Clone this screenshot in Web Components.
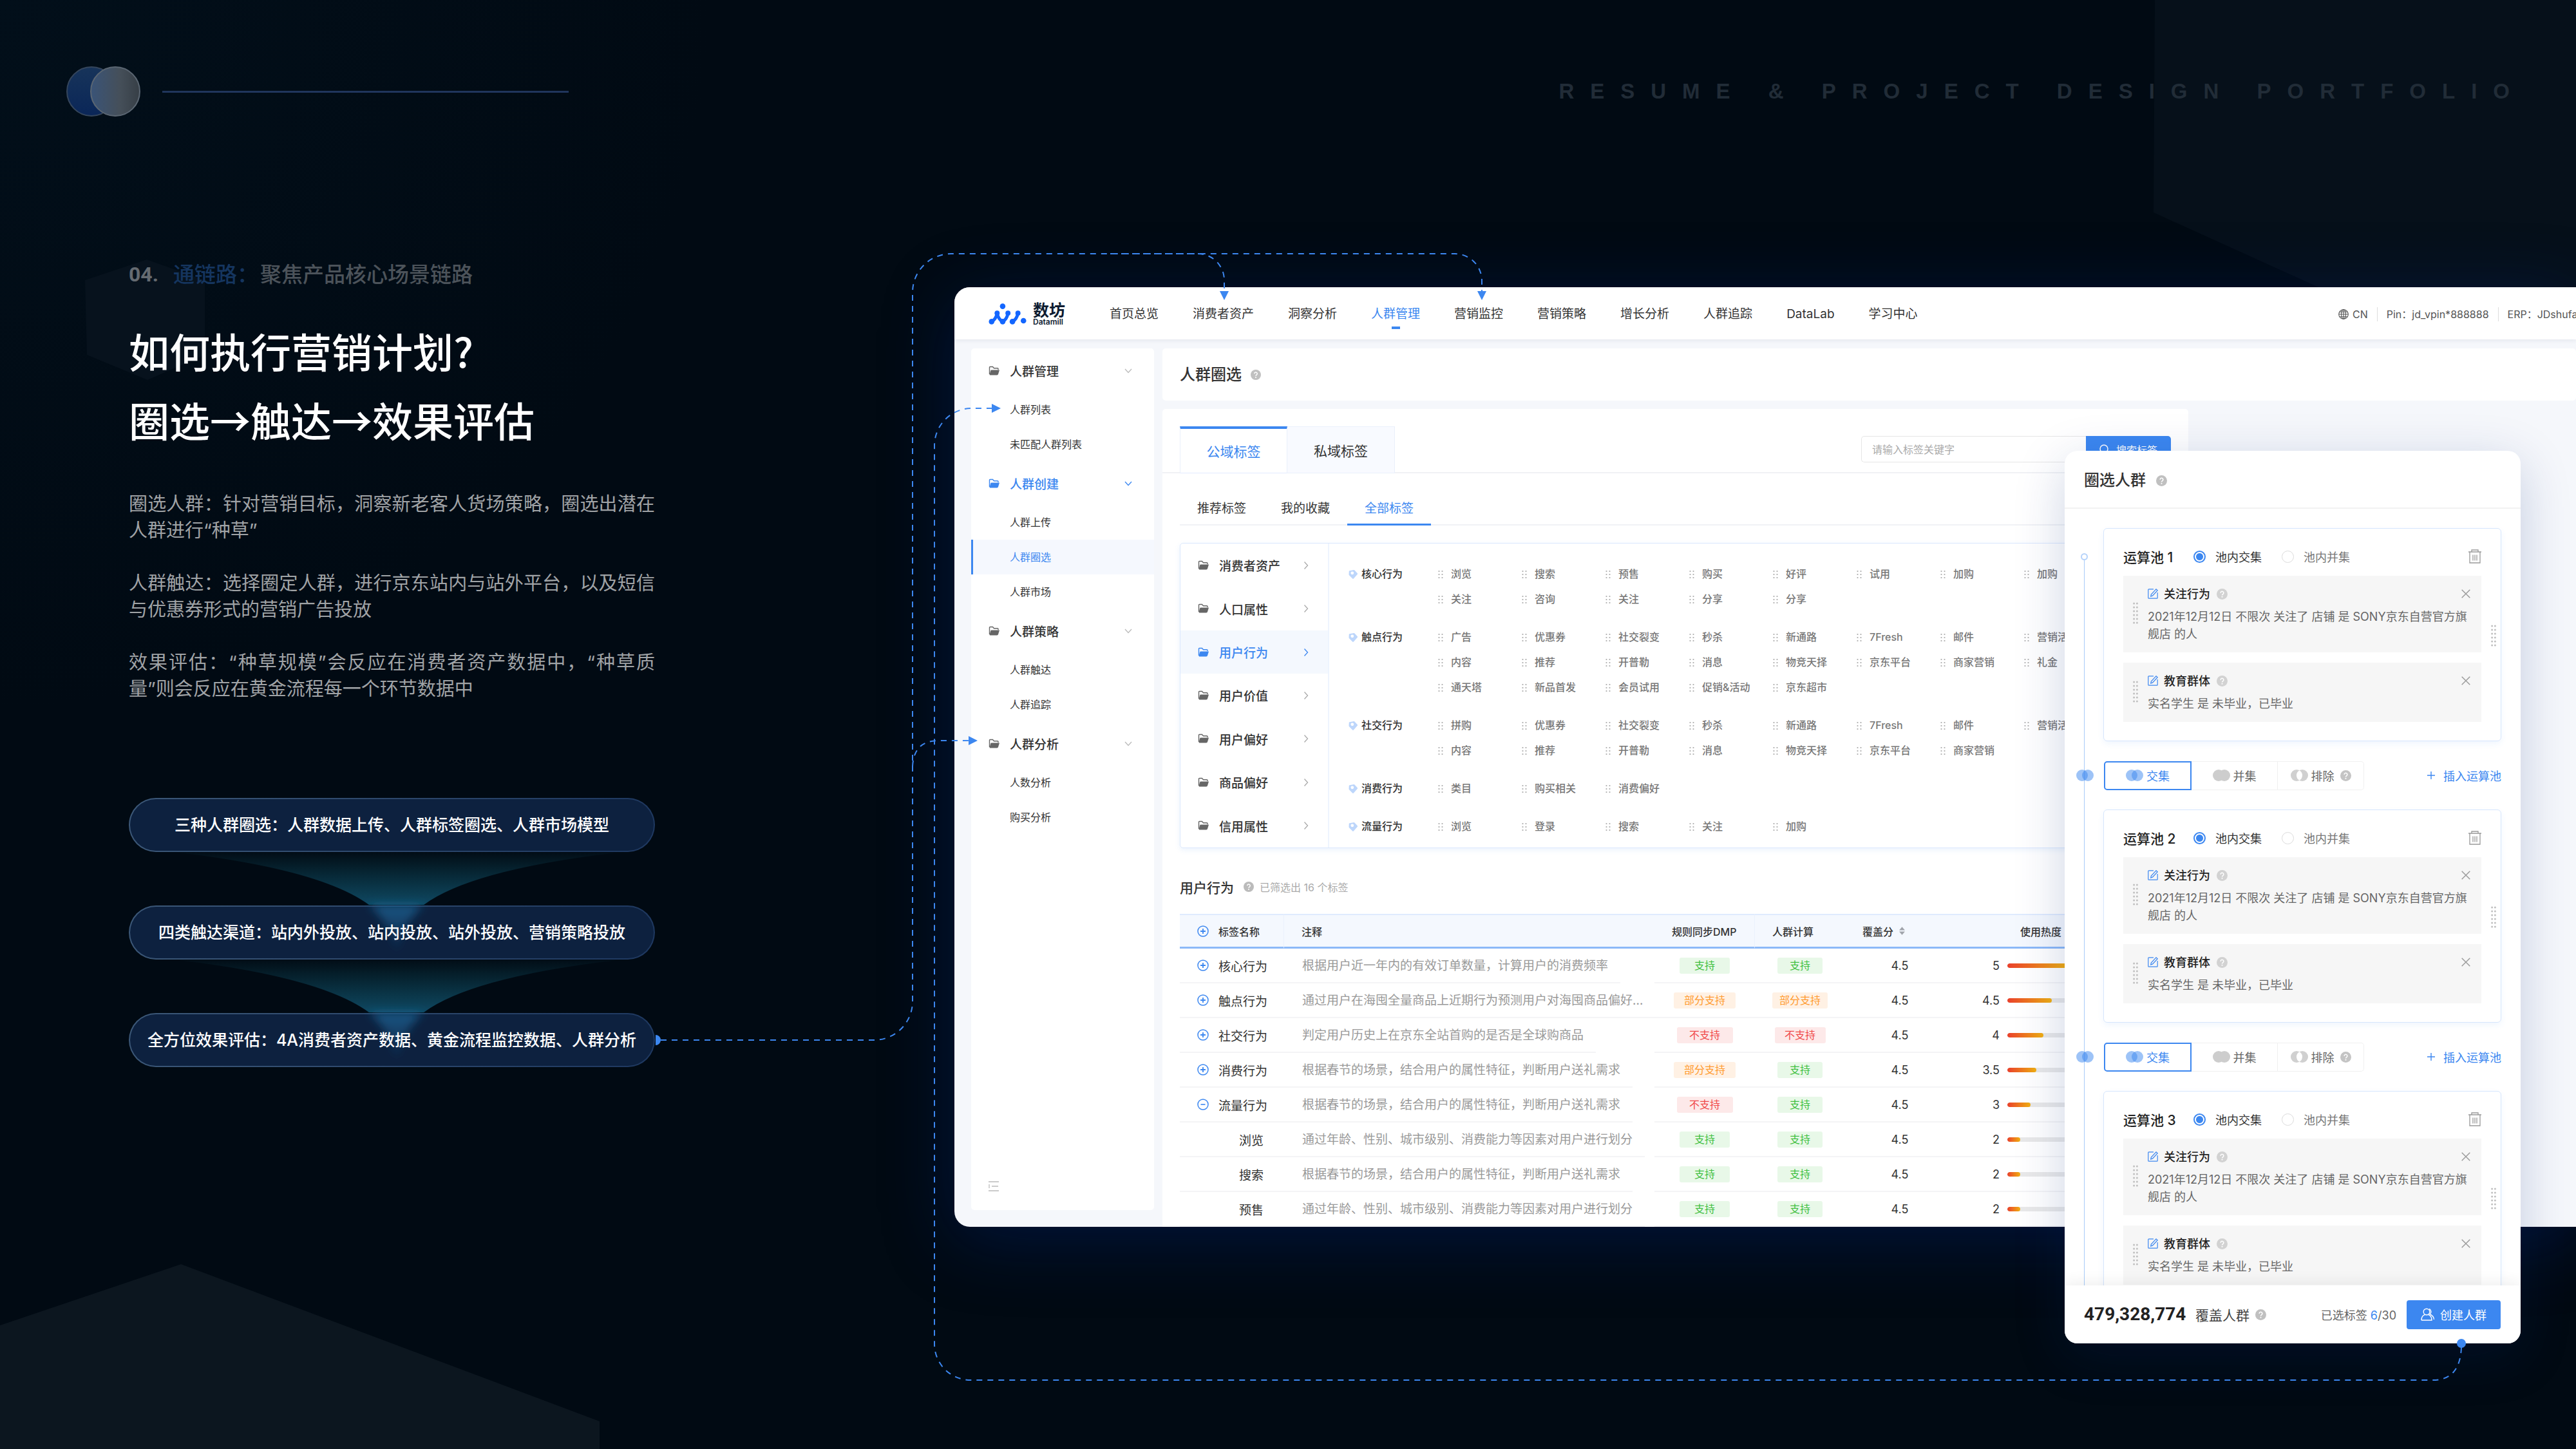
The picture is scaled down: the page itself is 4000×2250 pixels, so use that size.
<!DOCTYPE html>
<html lang="zh-CN">
<head>
<meta charset="utf-8">
<meta name="viewport" content="width=device-width, initial-scale=1">
<title>如何执行营销计划</title>
<style>
  html, body { margin: 0; background: #010a14; }
  body {
    font-family: Inter, "Noto Sans CJK SC", sans-serif;
    --blue: #3c87f0;
    --ink: #333;
    --line: #f0f2f5;
  }
</style>
</head>
<body>
<portfolio-slide>
  <step-pill>三种人群圈选：人群数据上传、人群标签圈选、人群市场模型</step-pill>
  <step-pill funnel>四类触达渠道：站内外投放、站内投放、站外投放、营销策略投放</step-pill>
  <step-pill funnel>全方位效果评估：4A消费者资产数据、黄金流程监控数据、人群分析</step-pill>
  <app-window slot="stage"></app-window>
  <crowd-dialog slot="stage"></crowd-dialog>
</portfolio-slide>

<script>
const ICONS = {
  folder: ['0 0 18 16', `<path d="M1.5 13V2.5q0-1 1-1h4l2 2.3h5.5q1 0 1 1V6" fill="none" stroke="currentColor" stroke-width="1.4"/><path d="M4.5 6.6H17L15 13q-.4 1.4-1.8 1.4H2.4q-1 0-.8-1L3.2 7.5q.3-.9 1.3-.9z" fill="currentColor"/>`],
  down: ['0 0 12 8', `<path d="M1 1l5 5.5L11 1" fill="none" stroke="currentColor" stroke-width="1.3"/>`],
  right: ['0 0 8 14', `<path d="M1.5 1.5L6.5 7l-5 5.5" fill="none" stroke="currentColor" stroke-width="1.3"/>`],
  help: ['0 0 16 16', `<circle cx="8" cy="8" r="8" fill="currentColor"/><path d="M5.8 6.3a2.2 2.2 0 1 1 3.4 1.8q-1.2.8-1.2 1.7" fill="none" stroke="#fff" stroke-width="1.5"/><circle cx="8" cy="12" r="1" fill="#fff"/>`],
  tag: ['0 0 16 16', `<path d="M2.6 2.2L9 .9q.7-.1 1.2.4l4.6 5q.6.7 0 1.4l-6 6.8q-.8.8-1.6 0L2 9.2q-.5-.5-.5-1.2l.2-4.7q0-.9.9-1.1z" fill="#bdd6fb"/><circle cx="6.8" cy="5.8" r="2.4" fill="#fff"/>`],
  dots: ['0 0 8 14', `<g fill="currentColor"><circle cx="1.5" cy="2" r="1.1"/><circle cx="6.5" cy="2" r="1.1"/><circle cx="1.5" cy="7" r="1.1"/><circle cx="6.5" cy="7" r="1.1"/><circle cx="1.5" cy="12" r="1.1"/><circle cx="6.5" cy="12" r="1.1"/></g>`],
  grip: ['0 0 8 34', `<g fill="currentColor">${[2,8,14,20,26,32].map(y => `<circle cx="1.6" cy="${y}" r="1.5"/><circle cx="6.4" cy="${y}" r="1.5"/>`).join('')}</g>`],
  plus: ['0 0 18 18', `<circle cx="9" cy="9" r="8" fill="none" stroke="currentColor" stroke-width="1.5"/><path d="M5 9h8M9 5v8" stroke="currentColor" stroke-width="1.8"/>`],
  minus: ['0 0 18 18', `<circle cx="9" cy="9" r="8" fill="none" stroke="currentColor" stroke-width="1.5"/><path d="M5.5 9h7" stroke="currentColor" stroke-width="1.6"/>`],
  add: ['0 0 12 12', `<path d="M0 6h12M6 0v12" stroke="currentColor" stroke-width="1.4"/>`],
  close: ['0 0 14 14', `<path d="M.7.7l12.6 12.6M13.3.7L.7 13.3" stroke="currentColor" stroke-width="1.4"/>`],
  edit: ['0 0 16 16', `<path d="M9 .8H1.8q-1 0-1 1v12.4q0 1 1 1h12.4q1 0 1-1V6" fill="none" stroke="currentColor" stroke-width="1.2"/><path d="M13 .8l2.2 1.9-7.6 8.2-2.9 1.2.6-3z" fill="none" stroke="currentColor" stroke-width="1.2"/>`],
  trash: ['0 0 20 22', `<g fill="none" stroke="currentColor" stroke-width="1.3"><path d="M0 4h20M5 4V1h10v3M2 4v17h16V4M7 8.5v9M10 8.5v9M13 8.5v9"/></g>`],
  inter: ['0 0 27 18', `<g fill="#3c87f0" fill-opacity=".5"><circle cx="9" cy="9" r="9"/><circle cx="18" cy="9" r="9"/></g>`],
  union: ['0 0 27 18', `<g fill="#cdcdcd"><circle cx="9" cy="9" r="9"/><circle cx="18" cy="9" r="9"/></g>`],
  except: ['0 0 27 18', `<g fill="#d0d0d0"><circle cx="9" cy="9" r="9"/><circle cx="18" cy="9" r="9"/></g><path d="M13.5 1.2a9 9 0 0 1 0 15.6 9 9 0 0 1 0-15.6z" fill="#fff"/>`],
  user: ['0 0 22 20', `<g fill="none" stroke="currentColor" stroke-width="1.4"><circle cx="9" cy="6" r="4.8"/><path d="M1 19q0-6.500 5-8.300M12 10.700q5 1.800 5 8.300H1M13 1.500a4.800 4.800 0 0 1 1 8.200q6 2.600 6.500 8.300"/></g>`],
  globe: ['0 0 16 16', `<g fill="none" stroke="currentColor" stroke-width="1.100"><circle cx="8" cy="8" r="7.300"/><ellipse cx="8" cy="8" rx="3.500" ry="7.300"/><path d="M8 .7v14.600M.7 8h14.600M1.800 4.300h12.400M1.800 11.700h12.400"/></g>`],
  search: ['0 0 16 16', `<g fill="none" stroke="currentColor" stroke-width="1.500"><circle cx="7" cy="7" r="6"/><path d="M11.500 11.500L15 15"/></g>`],
  sort: ['0 0 10 14', `<path d="M0 6l5-6 5 6zM0 8h10l-5 6z" fill="#a0a4ab"/>`],
  fold: ['0 0 16 18', `<path d="M0 2h16M5 9h10M0 16h16M1 6v6" fill="none" stroke="currentColor" stroke-width="1.300"/>`],
  logo: ['0 0 178 100', `<g fill="#1366ff" stroke="#1366ff"><g stroke="none"><circle cx="66" cy="14" r="13"/><circle cx="40" cy="46" r="12"/><circle cx="14" cy="86" r="13"/><circle cx="91" cy="46" r="12"/><circle cx="66" cy="86" r="13"/><circle cx="138" cy="46" r="12"/><circle cx="112" cy="86" r="13"/><circle cx="164" cy="82" r="13"/></g><path d="M14 86Q34 76 40 46Q46 76 66 86Q86 76 91 46M112 86Q132 76 138 46" fill="none" stroke-width="15"/></g>`]
};

const define = (name, render) => customElements.define(name, class extends HTMLElement {
  connectedCallback() {
    if (this.shadowRoot) return;
    const root = this.attachShadow({ mode: 'open' });
    const tpl = document.createElement('template');
    tpl.innerHTML = render(this);
    root.append(tpl.content.cloneNode(true));
  }
});

const BASE = `*, *::before { box-sizing: border-box; }
  a { color: inherit; text-decoration: none; }
  button { font: inherit; color: inherit; background: none; border: 0; padding: 0; margin: 0; cursor: pointer; }
  h1, h2, h3, p, ul { margin: 0; padding: 0; list-style: none; font-weight: 500; }`;
const icon = (name, w) => `<ui-icon name="${name}" size="${w}"></ui-icon>`;

define('ui-icon', el => {
  const [box, body] = ICONS[el.getAttribute('name')];
  const [, , w, h] = box.split(' ').map(Number);
  const size = Number(el.getAttribute('size')) || w;
  return `<style>:host { display: inline-flex; flex: none; } svg { display: block; overflow: visible; }</style>
    <svg viewBox="${box}" width="${size}" height="${Math.round(size * h / w)}" aria-hidden="true">${body}</svg>`;
});

define('step-pill', el => `<style>
  :host { position: relative; display: flex; align-items: center; justify-content: center; height: 84px; box-sizing: border-box;
    border: 2px solid transparent; border-radius: 42px; color: #fff; font-size: 25px; line-height: 36px; font-weight: 500; white-space: nowrap;
    background: linear-gradient(#0d213f, #0d213f) padding-box, linear-gradient(100deg, #3c5878, #1e3860) border-box; }
  svg { position: absolute; left: 76px; bottom: 6px; width: 680px; height: 158px; overflow: visible; }
  span { position: relative; }
  </style>
  ${el.hasAttribute('funnel') ? `<svg viewBox="0 0 680 158" aria-hidden="true"><defs>
    <linearGradient id="g" x1="0" y1="0" x2="0" y2="1"><stop offset="0" stop-color="#0e4f60" stop-opacity=".05"/><stop offset="1" stop-color="#0f4862"/></linearGradient>
    <linearGradient id="h" x1="0" y1="0" x2="0" y2="1"><stop offset="0" stop-color="#1c6696" stop-opacity=".8"/><stop offset="1" stop-color="#1c5a90" stop-opacity="0"/></linearGradient>
    <filter id="b" x="-50%" y="-20%" width="200%" height="140%"><feGaussianBlur stdDeviation="7"/></filter></defs>
    <path d="M0 0Q220 26 295 81H380Q455 26 680 0z" fill="url(#g)"/>
    <path d="M295 81H380Q350 104 338 158Q325 104 295 81z" fill="url(#h)" filter="url(#b)"/></svg>` : ''}
  <span><slot></slot></span>`);

define('flow-lines', () => `<style>
  :host { position: absolute; inset: 0; pointer-events: none; }
  svg { width: 100%; height: 100%; display: block; }
  .l { fill: none; stroke: #3c87f0; stroke-width: 2; stroke-dasharray: 9 8; } .f { fill: #3c87f0; }
  </style><svg aria-hidden="true">
  <path class="l" d="M1026 1615H1357A60 60 0 0 0 1417 1555V454A60 60 0 0 1 1477 394H2259A42 42 0 0 1 2301 436V452"/>
  <path class="l" d="M1724 394H1860A41 41 0 0 1 1901 435V452"/>
  <path class="l" d="M1417 1190Q1419 1150 1457 1150H1504"/>
  <path class="l" d="M3822 2092Q3820 2143 3778 2143H1507A56 56 0 0 1 1451 2087V692A58 58 0 0 1 1509 634H1540"/>
  <path class="f" d="M1894 452h14l-7 14zM2294 452h14l-7 14zM1540 627v14l14-7zM1504 1143v14l14-7zM1018 1607a8 8 0 0 1 0 16z"/>
  <circle class="f" cx="3822" cy="2086" r="7"/></svg>`);

define('portfolio-slide', () => `<style>${BASE}
  :host { position: relative; display: flex; flex-direction: column; min-height: 100vh; overflow: hidden; isolation: isolate;
    background: radial-gradient(circle at 0 0, #020f1a, #010a13 24%); }
  .shapes { position: absolute; inset: 0; width: 100%; height: 100%; z-index: -1; }
  header { display: flex; align-items: center; gap: 34px; height: 78px; margin-top: 103px; padding: 0 78px 0 103px; }
  .mark { display: block; width: 115px; height: 78px; }
  .rule { width: 631px; height: 3px; background: #20355c; }
  .strap { margin-left: auto; font: 700 33px/40px "Liberation Sans", sans-serif; letter-spacing: 25px; color: #212c37; white-space: nowrap; }
  main { display: flex; align-items: flex-start; margin-top: 221px; }
  .copy { flex: 0 0 1482px; padding: 2px 465px 0 200px; }
  .kicker { font-size: 33px; line-height: 44px; color: #4c535a; white-space: nowrap; display: flex; }
  .kicker b { font: 700 32px/44px Roboto, sans-serif; color: #656b71; width: 69px; }
  .kicker i { font-style: normal; color: #15355f; margin-right: 3px; }
  h1 { margin-top: 42px; font: 500 63px/107px "Noto Sans CJK SC", sans-serif; color: #fff; white-space: nowrap; }
  .text { margin-top: 58px; display: grid; gap: 41px; font-size: 29px; line-height: 41px; color: #a0a3a6; }
  .text p { font-weight: 400; }
  .text span { display: block; white-space: nowrap; }
  .text .full { text-align: justify; text-align-last: justify; white-space: normal; }
  .steps { display: grid; gap: 83px; margin-top: 149px; }
  .stage { position: relative; flex: 1; min-width: 0; margin-top: 44px; }
  </style>
  <svg class="shapes" aria-hidden="true">
    <path d="M132 435L228 403L318 435V551L229 590L135 551z" fill="#07121d"/>
    <path d="M0 2058L281 1963L931 2207V2250H0z" fill="#0c161f"/>
    <path d="M3346 0H4000V600L3600 446L3344 330z" fill="#06101a"/>
  </svg>
  <header>
    <svg class="mark" viewBox="0 0 115 78" aria-hidden="true"><defs>
      <linearGradient id="a" x1="0" y1="0" x2="0" y2="1"><stop offset="0" stop-color="#17345a"/><stop offset="1" stop-color="#0a2658"/></linearGradient>
      <linearGradient id="c" x1="0" y1="0" x2="1" y2="0"><stop offset="0" stop-color="#3a5478"/><stop offset=".6" stop-color="#454f59"/><stop offset="1" stop-color="#363e46"/></linearGradient></defs>
      <circle cx="39" cy="39" r="38" fill="url(#a)" stroke="#35465c" stroke-width="2"/>
      <circle cx="76" cy="39" r="38" fill="url(#c)" stroke="#5b6672" stroke-width="2"/></svg>
    <div class="rule"></div>
    <div class="strap">RESUME &amp; PROJECT DESIGN PORTFOLIO</div>
  </header>
  <main>
    <section class="copy">
      <p class="kicker"><b>04.</b><i>通链路：</i><span>聚焦产品核心场景链路</span></p>
      <h1>如何执行营销计划?<br>圈选→触达→效果评估</h1>
      <div class="text">
        <p><span class="full">圈选人群：针对营销目标，洞察新老客人货场策略，圈选出潜在</span><span>人群进行“种草”</span></p>
        <p><span class="full">人群触达：选择圈定人群，进行京东站内与站外平台，以及短信</span><span>与优惠券形式的营销广告投放</span></p>
        <p><span class="full">效果评估：“种草规模”会反应在消费者资产数据中，“种草质</span><span>量”则会反应在黄金流程每一个环节数据中</span></p>
      </div>
      <div class="steps"><slot></slot></div>
    </section>
    <section class="stage"><slot name="stage"></slot></section>
  </main>
  <flow-lines></flow-lines>`);

const NAV = ['首页总览', '消费者资产', '洞察分析', '人群管理', '营销监控', '营销策略', '增长分析', '人群追踪', 'DataLab', '学习中心'];
define('app-window', () => `<style>${BASE}
  :host { display: block; overflow: hidden; border-radius: 24px 0 0 24px; background: #f5f7fb; color: var(--ink); box-shadow: 0 20px 110px rgba(0, 36, 120, .4); }
  header { position: relative; display: flex; align-items: center; height: 81px; padding: 2px 0 0 53px; background: #fff; box-shadow: 0 2px 6px rgba(40, 50, 90, .08); white-space: nowrap; }
  .brand { display: flex; align-items: center; gap: 10px; width: 188px; color: #0d1b30; }
  .brand b { display: block; font-size: 25px; line-height: 24px; font-weight: 700; }
  .brand small { display: block; font-size: 12px; line-height: 12px; font-weight: 600; }
  nav { display: flex; gap: 53px; font-size: 19px; line-height: 28px; }
  nav a { position: relative; }
  nav a.on { color: var(--blue); }
  nav a.on::before { content: ""; position: absolute; left: 50%; bottom: -9px; width: 13px; height: 4px; margin-left: -6px; background: currentColor; }
  .who { display: flex; align-items: center; position: absolute; left: 2149px; font-size: 16px; line-height: 24px; color: #555; }
  .who ui-icon { margin-right: 6px; }
  .who i { width: 1px; height: 22px; margin: 0 14px; background: #ddd; }
  .body { display: flex; align-items: flex-start; gap: 13px; padding: 14px 0 0 26px; }
  main { flex: 1; min-width: 0; }
  .title { display: flex; align-items: center; gap: 14px; height: 81px; padding-left: 27px; background: #fff; border-radius: 5px; }
  h1 { font-size: 24px; line-height: 36px; }
  .panel { margin: 13px 602px 0 0; background: #fff; border-radius: 5px 5px 0 0; padding-top: 27px; }
  .tabs { display: flex; align-items: center; height: 73px; padding: 0 27px; border-bottom: 2px solid var(--line); }
  .tabs > button { align-self: stretch; width: 167px; height: 73px; font-size: 21px; border: 1px solid #eaf0fb; border-left: 0; background: #f8faff; }
  .tabs > button.on { color: var(--blue); background: #fff; border: 1px solid #eaf0fb; border-top: 4px solid var(--blue); border-bottom-color: #e2ebff; }
  form { display: flex; margin-left: auto; font-size: 16px; }
  input { width: 349px; height: 41px; padding: 0 16px; border: 1px solid #e6e6e6; border-right: 0; border-radius: 5px 0 0 5px; font: inherit; outline: 0; background: none; }
  input::placeholder { color: #aaa; }
  form button { display: flex; align-items: center; justify-content: center; gap: 10px; width: 132px; height: 41px; border-radius: 0 5px 5px 0; background: var(--blue); color: #fff; }
  .sub { display: flex; height: 54px; margin: 27px 27px 0; border-bottom: 2px solid var(--line); font-size: 19px; line-height: 55px; }
  .sub a { height: 54px; padding: 0 27px; }
  .sub a.on { color: var(--blue); border-bottom: 3px solid var(--blue); }
  tag-board { margin: 27px 27px 0; }
  .count { display: flex; align-items: center; height: 30px; margin: 45px 27px 27px; font-size: 16px; color: #aaa; }
  h2 { font-size: 21px; color: var(--ink); margin-right: 15px; }
  .count ui-icon { margin-right: 9px; color: #bbb; }
  .title ui-icon { color: #c0c0c0; }
  rule-table { margin: 0 27px; }
  </style>
  <header>
    <div class="brand">${icon('logo', 59)}<span><b>数坊</b><small>Datamill</small></span></div>
    <nav>${NAV.map(t => `<a href="#"${t === '人群管理' ? ' class="on"' : ''}>${t}</a>`).join('')}</nav>
    <div class="who">${icon('globe', 16)}<span>CN</span><i></i><span>Pin：jd_vpin*888888</span><i></i><span>ERP：JDshufa</span></div>
  </header>
  <div class="body">
    <side-menu></side-menu>
    <main>
      <div class="title"><h1>人群圈选</h1>${icon('help', 16)}</div>
      <div class="panel">
        <div class="tabs"><button class="on">公域标签</button><button>私域标签</button>
          <form onsubmit="return false"><input type="text" aria-label="请输入标签关键字" placeholder="请输入标签关键字"><button>${icon('search', 16)}搜索标签</button></form></div>
        <div class="sub"><a href="#">推荐标签</a><a href="#">我的收藏</a><a href="#" class="on">全部标签</a></div>
        <tag-board></tag-board>
        <div class="count"><h2>用户行为</h2>${icon('help', 16)}<span>已筛选出 16 个标签</span></div>
        <rule-table></rule-table>
      </div>
    </main>
  </div>`);

const MENU = [['人群管理', '人群列表', '未匹配人群列表'], ['人群创建', '人群上传', '人群圈选', '人群市场'], ['人群策略', '人群触达', '人群追踪'], ['人群分析', '人数分析', '购买分析']];
define('side-menu', () => `<style>${BASE}
  :host { display: flex; flex-direction: column; flex: 0 0 284px; height: 1338px; box-sizing: border-box; padding: 1px 0 24px; background: #fff; border-radius: 5px; }
  .head { display: flex; align-items: center; width: 100%; height: 67px; padding: 0 34px 0 27px; font-size: 19px; font-weight: 500; }
  .head span { flex: 1; text-align: left; margin-left: 15px; }
  .head ui-icon:first-child { color: #666; } .head ui-icon:last-child { color: #bbb; }
  .on .head, .on .head ui-icon { color: var(--blue); }
  a { display: block; height: 54px; padding-left: 60px; font-size: 16px; line-height: 54px; }
  a.cur { padding-left: 57px; border-left: 3px solid var(--blue); color: var(--blue); background: #f5f8fe; }
  .fold { margin: auto 0 0 27px; align-self: flex-start; color: #bbb; }
  </style>
  ${MENU.map(([h, ...items], i) => `<div${i === 1 ? ' class="on"' : ''}><button class="head">${icon('folder', 18)}<span>${h}</span>${icon('down', 12)}</button>${items.map(t => `<a href="#"${t === '人群圈选' ? ' class="cur"' : ''}>${t}</a>`).join('')}</div>`).join('')}
  <button class="fold" aria-label="收起">${icon('fold', 16)}</button>`);

const CATS = ['消费者资产', '人口属性', '用户行为', '用户价值', '用户偏好', '商品偏好', '信用属性'];
const TAGS = [
  ['核心行为', '浏览 搜索 预售 购买 好评 试用 加购 加购 关注 咨询 关注 分享 分享'],
  ['触点行为', '广告 优惠券 社交裂变 秒杀 新通路 7Fresh 邮件 营销活动 内容 推荐 开普勒 消息 物竞天择 京东平台 商家营销 礼金 通天塔 新品首发 会员试用 促销&活动 京东超市'],
  ['社交行为', '拼购 优惠券 社交裂变 秒杀 新通路 7Fresh 邮件 营销活动 内容 推荐 开普勒 消息 物竞天择 京东平台 商家营销'],
  ['消费行为', '类目 购买相关 消费偏好'],
  ['流量行为', '浏览 登录 搜索 关注 加购']];
define('tag-board', () => `<style>${BASE}
  :host { display: flex; border: 1px solid #dbe8fd; border-radius: 5px; box-shadow: 0 3px 8px rgba(60, 135, 240, .1); white-space: nowrap; }
  .cats { display: grid; grid-auto-rows: 1fr; width: 231px; border-right: 2px solid #eef4fe; }
  .cats button { display: flex; align-items: center; padding: 0 30px 0 27px; font-size: 19px; font-weight: 500; }
  .cats span { flex: 1; margin-left: 15px; text-align: left; }
  .cats ui-icon:first-child { color: #666; } .cats ui-icon:last-child { color: #aaa; }
  .cats .on, .cats .on ui-icon { color: var(--blue); } .cats .on { background: #f4f8fe; }
  .list { display: grid; gap: 20px; padding: 28px 0 13px 29px; font-size: 16px; line-height: 39px; }
  .row { display: flex; align-items: flex-start; }
  h3 { display: flex; align-items: center; gap: 5px; width: 140px; font-size: 16px; }
  ul { display: grid; grid-template-columns: repeat(8, 130px); color: #777; }
  li { display: flex; align-items: center; gap: 12px; }
  li ui-icon { color: #aaa; }
  </style>
  <div class="cats">${CATS.map(t => `<button${t === '用户行为' ? ' class="on"' : ''}>${icon('folder', 18)}<span>${t}</span>${icon('right', 8)}</button>`).join('')}</div>
  <div class="list">${TAGS.map(([h, s]) => `<div class="row"><h3>${icon('tag', 16)}${h}</h3><ul>${s.replace('&', '&amp;').split(' ').map(t => `<li>${icon('dots', 8)}${t}</li>`).join('')}</ul></div>`).join('')}</div>`);

const SPRING = '根据春节的场景，结合用户的属性特征，判断用户送礼需求';
const AGE = '通过年龄、性别、城市级别、消费能力等因素对用户进行划分';
const STATE = { ok: '支持', part: '部分支持', no: '不支持' };
const ROWS = [
  ['plus', '核心行为', '根据用户近一年内的有效订单数量，计算用户的消费频率', 'ok', 'ok', '5', 92],
  ['plus', '触点行为', '通过用户在海囤全量商品上近期行为预测用户对海囤商品偏好…', 'part', 'part', '4.5', 69],
  ['plus', '社交行为', '判定用户历史上在京东全站首购的是否是全球购商品', 'no', 'no', '4', 56],
  ['plus', '消费行为', SPRING, 'part', 'ok', '3.5', 45],
  ['minus', '流量行为', SPRING, 'no', 'ok', '3', 36],
  ['', '浏览', AGE, 'ok', 'ok', '2', 20],
  ['', '搜索', SPRING, 'ok', 'ok', '2', 20],
  ['', '预售', AGE, 'ok', 'ok', '2', 20]];
define('rule-table', () => `<style>${BASE}
  :host { display: block; }
  table { width: 100%; table-layout: fixed; border-collapse: separate; border-spacing: 0; font-size: 19px; white-space: nowrap; }
  th, td { padding: 0; height: 54px; text-align: left; font-weight: 400; }
  th { background: #f4f8fe; font-size: 16px; font-weight: 500; border-top: 2px solid #dfebfe; border-bottom: 3px solid #8cb9f8; padding-left: 27px; }
  th.n { padding-left: 0; } th.n, th.s { border-right: 1px solid #eaf1fc; }
  td { border-bottom: 2px solid #f4f4f6; }
  td.d { border: 0; color: #999; }
  td.d div { display: inline-block; vertical-align: top; height: 54px; line-height: 53px; padding: 0 19px 0 28px; border-bottom: 2px solid #f4f4f6; }
  .name { display: flex; align-items: center; gap: 15px; padding-left: 27px; }
  .name ui-icon { color: var(--blue); } .child { padding-left: 92px; }
  .c { text-align: center; }
  .tag { display: inline-block; border-radius: 3px; width: 78px; font-size: 16px; line-height: 25px; text-align: center; vertical-align: middle; }
  .tag.part { width: 96px; } .tag.no { width: 87px; }
  .tag.slim { width: 70px; } .slim.tag.part { width: 86px; } .slim.tag.no { width: 79px; }
  .ok { color: #3fbf3f; background: #e8f8e8; } .part { color: #ff9a2e; background: #fff1e4; } .no { color: #f04848; background: #fde9e9; }
  .num { font-size: 18px; }
  .heat { display: flex; align-items: center; gap: 12px; }
  .heat b { width: 70px; font-weight: 400; text-align: right; }
  .heat span { width: 133px; height: 7px; border-radius: 4px; background: #e9e9e9; overflow: hidden; }
  .heat i { display: block; height: 7px; border-radius: 4px; background: linear-gradient(90deg, #e9402c, #f2b010); }
  .sort { display: flex; align-items: center; gap: 9px; }
  </style>
  <table>
    <colgroup><col style="width:162px"><col style="width:575px"><col style="width:156px"><col style="width:140px"><col style="width:170px"><col></colgroup>
    <thead><tr><th class="n"><div class="name">${icon('plus', 18)}标签名称</div></th><th>注释</th><th class="s">规则同步DMP</th><th>人群计算</th><th><div class="sort">覆盖分${icon('sort', 9)}</div></th><th style="padding-left:102px">使用热度</th></tr></thead>
    <tbody>${ROWS.map(([ic, n, d, a, b, v, w]) => `<tr><td><div class="name${ic ? '' : ' child'}">${ic ? icon(ic, 18) : ''}${n}</div></td><td class="d"><div>${d}</div></td>
      <td class="c"><span class="tag ${a}">${STATE[a]}</span></td><td class="c"><span class="tag slim ${b}">${STATE[b]}</span></td>
      <td class="c num">4.5</td><td class="num"><div class="heat"><b>${v}</b><span><i style="width:${w}px"></i></span></div></td></tr>`).join('')}</tbody>
  </table>`);

define('pool-item', el => `<style>${BASE}
  :host { display: flex; align-items: center; padding: 12px 17px 15px 15px; background: #f6f6f6; font-size: 18px; line-height: 27px; color: #666; }
  .in { flex: 1; margin-left: 15px; white-space: nowrap; }
  .top { display: flex; align-items: center; height: 32px; margin-bottom: 6px; }
  h3 { margin: 0 10px 0 9px; font-size: 18px; color: #222; }
  .top > ui-icon { color: #d2d2d2; } .top > ui-icon:first-child { color: var(--blue); }
  button { display: flex; margin-left: auto; color: #999; } .grip { color: #c0c0c0; }
  </style>
  <ui-icon class="grip" name="grip" size="8"></ui-icon>
  <div class="in"><div class="top">${icon('edit', 16)}<h3>${el.getAttribute('label')}</h3>${icon('help', 17)}<button aria-label="删除">${icon('close', 14)}</button></div><slot></slot></div>`);

define('pool-card', el => {
  const n = el.getAttribute('index');
  return `<style>${BASE}
  :host { position: relative; display: block; box-sizing: border-box; margin-left: 60px; padding: 28px 30px 29px; border: 1px solid #d6e6fd; border-radius: 6px; box-shadow: 0 4px 10px rgba(60, 135, 240, .08); white-space: nowrap; }
  .head { display: flex; align-items: center; height: 30px; margin-bottom: 15px; font-size: 18px; }
  h2 { width: 109px; font-size: 21px; color: #222; }
  label { display: flex; align-items: center; gap: 15px; margin-right: 31px; }
  label + label { color: #777; }
  input { appearance: none; width: 19px; height: 19px; margin: 0; border: 1px solid #dcdcdc; border-radius: 50%; }
  input:checked { border: 2px solid var(--blue); background: radial-gradient(circle, var(--blue) 0 5px, transparent 6px); }
  .head button { display: flex; margin-left: auto; color: #999; }
  .items { display: grid; gap: 16px; }
  .grip { position: absolute; right: 7px; top: 149px; color: #c0c0c0; }
  </style>
  <div class="head"><h2>运算池 ${n}</h2>
    <label><input type="radio" name="mode" checked>池内交集</label><label><input type="radio" name="mode">池内并集</label>
    <button aria-label="删除运算池">${icon('trash', 20)}</button></div>
  <div class="items"><pool-item label="关注行为">2021年12月12日 不限次 关注了 店铺 是 SONY京东自营官方旗<br>舰店 的人</pool-item><pool-item label="教育群体">实名学生 是 未毕业，已毕业</pool-item></div>
  <ui-icon class="grip" name="grip" size="8"></ui-icon>`;
});

define('pool-join', () => `<style>${BASE}
  :host { display: flex; align-items: center; height: 106px; padding-left: 18px; font-size: 18px; color: #666; white-space: nowrap; }
  :host > ui-icon, .mark { position: relative; }
  .seg { display: flex; margin-left: 16px; }
  .seg button { display: flex; align-items: center; justify-content: center; gap: 5px; width: 134px; height: 45px; border: 1px solid #f0f0f0; border-left: 0; }
  .seg button:first-child { width: 136px; border: 2px solid var(--blue); border-radius: 5px 0 0 5px; color: var(--blue); }
  .seg button:last-child { border-radius: 0 5px 5px 0; }
  .seg ui-icon + span + ui-icon { margin-left: 4px; color: #c4c4c4; }
  .add { display: flex; align-items: center; gap: 13px; margin-left: auto; color: var(--blue); }
  </style>
  <ui-icon class="mark" name="inter" size="27"></ui-icon>
  <div class="seg"><button>${icon('inter', 27)}<span>交集</span></button><button>${icon('union', 27)}<span>并集</span></button><button>${icon('except', 27)}<span>排除</span>${icon('help', 17)}</button></div>
  <button class="add">${icon('add', 12)}插入运算池</button>`);

define('crowd-dialog', () => `<style>${BASE}
  :host { position: absolute; top: 254px; right: 86px; bottom: -181px; width: 708px; display: flex; flex-direction: column; overflow: hidden; border-radius: 20px; background: #fff; color: var(--ink); box-shadow: 0 20px 80px rgba(10, 40, 120, .2); }
  header { display: flex; align-items: center; gap: 16px; height: 90px; padding-top: 4px; padding-left: 30px; border-bottom: 2px solid #f2f2f2; flex: none; }
  h1 { font-size: 24px; line-height: 36px; }
  header ui-icon, footer ui-icon { color: #c0c0c0; }
  .body { flex: 1; min-height: 0; overflow: hidden; padding: 30px 30px 0 0; }
  .flow { position: relative; }
  .flow::before { content: ""; position: absolute; left: 30px; top: 50px; bottom: 0; width: 1px; background: #a9cbf8; }
  .start { position: absolute; left: 25px; top: 39px; width: 11px; height: 11px; border: 2px solid #b6d3fa; border-radius: 50%; }
  footer { position: relative; display: flex; align-items: center; flex: none; height: 90px; padding: 0 31px 0 30px; font-size: 18px; color: #666; white-space: nowrap; background: #fff; box-shadow: 0 -6px 20px rgba(0, 0, 0, .06); }
  footer strong { width: 173px; font: 700 28px/40px Roboto, sans-serif; color: #222; }
  footer .cover { font-size: 21px; color: #444; margin-right: 9px; }
  footer em { font-style: normal; color: var(--blue); }
  .sel { margin-left: auto; margin-right: 16px; }
  .go { display: flex; align-items: center; justify-content: center; gap: 8px; width: 146px; height: 45px; border-radius: 4px; background: var(--blue); color: #fff; }
  .go ui-icon { color: #fff; }
  </style>
  <header><h1>圈选人群</h1>${icon('help', 17)}</header>
  <div class="body"><div class="flow"><i class="start"></i>
    <pool-card index="1"></pool-card><pool-join></pool-join><pool-card index="2"></pool-card><pool-join></pool-join><pool-card index="3"></pool-card>
  </div></div>
  <footer><strong>479,328,774</strong><span class="cover">覆盖人群</span>${icon('help', 17)}
    <span class="sel">已选标签 <em>6</em>/30</span><button class="go">${icon('user', 22)}创建人群</button></footer>`);
</script>
</body>
</html>
